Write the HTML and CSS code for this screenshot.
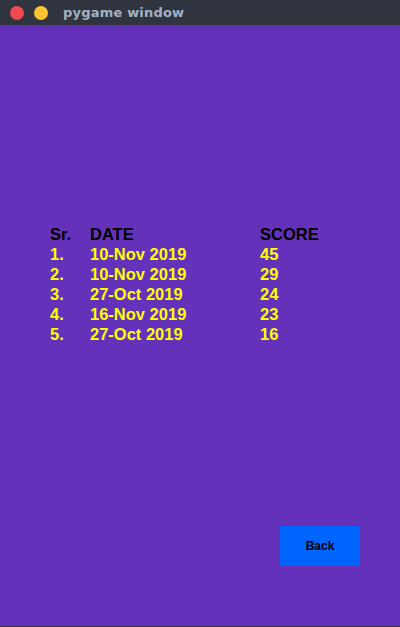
FILE: index.html
```html
<!DOCTYPE html>
<html>
<head>
<meta charset="utf-8">
<link rel="stylesheet" href="styles.css">
</head>
<body>
<div class="window">
  <div class="titlebar">
    <span class="dot red"></span>
    <span class="dot yellow"></span>
    <span class="title">pygame window</span>
  </div>
  <div class="canvas">
    <div class="table">
      <div class="row head"><span class="c1">Sr.</span><span class="c2">DATE</span><span class="c3">SCORE</span></div>
      <div class="row"><span class="c1">1.</span><span class="c2">10-Nov 2019</span><span class="c3">45</span></div>
      <div class="row"><span class="c1">2.</span><span class="c2">10-Nov 2019</span><span class="c3">29</span></div>
      <div class="row"><span class="c1">3.</span><span class="c2">27-Oct 2019</span><span class="c3">24</span></div>
      <div class="row"><span class="c1">4.</span><span class="c2">16-Nov 2019</span><span class="c3">23</span></div>
      <div class="row"><span class="c1">5.</span><span class="c2">27-Oct 2019</span><span class="c3">16</span></div>
    </div>
    <div class="btnwrap"><div class="back">Back</div></div>
  </div>
  <div class="bottom"></div>
</div>
</body>
</html>
```
FILE: styles.css
```css
html, body { margin: 0; padding: 0; }
body { width: 400px; height: 627px; overflow: hidden; }
.window { display: flex; flex-direction: column; height: 627px; background: #6432ba; }
.titlebar { height: 25px; background: #2f343f; display: flex; align-items: center; flex-shrink: 0; }
.dot { width: 14px; height: 14px; border-radius: 50%; display: block; }
.red { background: #f04a50; margin-left: 10px; }
.yellow { background: #fdc232; margin-left: 10px; }
.title { font-family: "DejaVu Sans", sans-serif; font-weight: bold; font-size: 13px; color: #a1b1c6; margin-left: 15px; letter-spacing: 0.2px; }
.canvas { flex: 1; display: flex; flex-direction: column; }
.table { margin-top: 199px; margin-left: 50px; font-family: "Liberation Sans", Arial, sans-serif; font-weight: bold; font-size: 16.5px; color: #ffff00; }
.row { display: flex; height: 20px; line-height: 20px; }
.head { color: #000; }
.c1 { width: 40px; }
.c2 { width: 170px; }
.btnwrap { margin-top: 182px; display: flex; padding-left: 280px; }
.back { width: 80px; height: 40px; background: #0064ff; color: #000; font-family: "Liberation Sans", Arial, sans-serif; font-weight: bold; font-size: 12px; display: flex; align-items: center; justify-content: center; }
.bottom { height: 1px; background: #2f343f; flex-shrink: 0; }
```
